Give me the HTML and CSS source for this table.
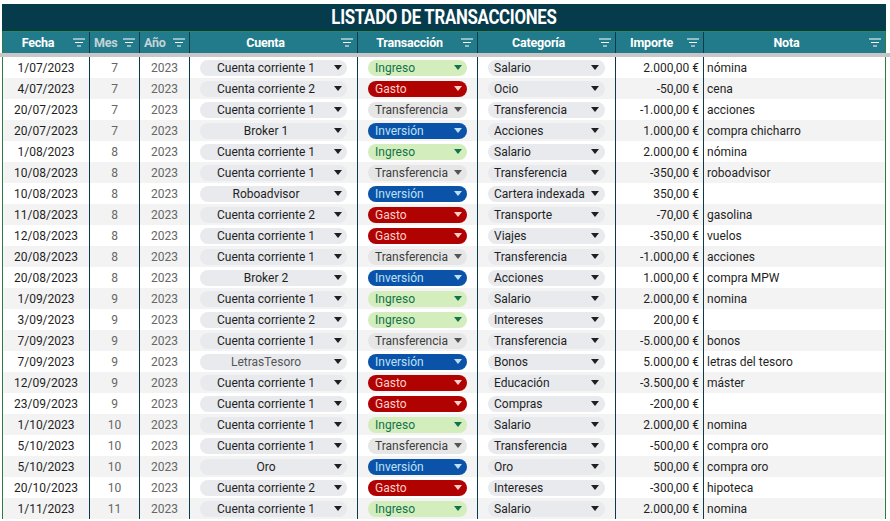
FILE: index.html
```html
<!DOCTYPE html>
<html lang="es">
<head>
<meta charset="utf-8">
<title>Listado de transacciones</title>
<link rel="stylesheet" href="styles.css">
</head>
<body>
<div class="sheet">
  <div class="title"><span class="tt">LISTADO DE TRANSACCIONES</span></div>
  <div class="head">
    <div class="hc"><span class="hl">Fecha</span><svg class="flt" viewBox="0 0 12 9"><path d="M0 1h12M2 4.5h8M4 8h4"/></svg></div>
    <div class="hc"><span class="hl dim">Mes</span><svg class="flt" viewBox="0 0 12 9"><path d="M0 1h12M2 4.5h8M4 8h4"/></svg></div>
    <div class="hc"><span class="hl dim">Año</span><svg class="flt" viewBox="0 0 12 9"><path d="M0 1h12M2 4.5h8M4 8h4"/></svg></div>
    <div class="hc"><span class="hl">Cuenta</span><svg class="flt" viewBox="0 0 12 9"><path d="M0 1h12M2 4.5h8M4 8h4"/></svg></div>
    <div class="hc"><span class="hl">Transacción</span><svg class="flt" viewBox="0 0 12 9"><path d="M0 1h12M2 4.5h8M4 8h4"/></svg></div>
    <div class="hc"><span class="hl">Categoría</span><svg class="flt" viewBox="0 0 12 9"><path d="M0 1h12M2 4.5h8M4 8h4"/></svg></div>
    <div class="hc"><span class="hl">Importe</span><svg class="flt" viewBox="0 0 12 9"><path d="M0 1h12M2 4.5h8M4 8h4"/></svg></div>
    <div class="hc"><span class="hl">Nota</span><svg class="flt" viewBox="0 0 12 9"><path d="M0 1h12M2 4.5h8M4 8h4"/></svg></div>
  </div>
  <div class="freeze"></div>
  <div class="body">
    <div class="row"><div class="c date">1/07/2023</div><div class="c num">7</div><div class="c num">2023</div><div class="c"><span class="chip acc"><span class="t">Cuenta corriente 1</span><i class="arr"></i></span></div><div class="c"><span class="chip tr ing"><span class="t">Ingreso</span><i class="arr"></i></span></div><div class="c"><span class="chip cat"><span class="t">Salario</span><i class="arr"></i></span></div><div class="c amt">2.000,00 €</div><div class="c note">nómina</div></div>
    <div class="row"><div class="c date">4/07/2023</div><div class="c num">7</div><div class="c num">2023</div><div class="c"><span class="chip acc"><span class="t">Cuenta corriente 2</span><i class="arr"></i></span></div><div class="c"><span class="chip tr gas"><span class="t">Gasto</span><i class="arr"></i></span></div><div class="c"><span class="chip cat"><span class="t">Ocio</span><i class="arr"></i></span></div><div class="c amt">-50,00 €</div><div class="c note">cena</div></div>
    <div class="row"><div class="c date">20/07/2023</div><div class="c num">7</div><div class="c num">2023</div><div class="c"><span class="chip acc"><span class="t">Cuenta corriente 1</span><i class="arr"></i></span></div><div class="c"><span class="chip tr tra"><span class="t">Transferencia</span><i class="arr"></i></span></div><div class="c"><span class="chip cat"><span class="t">Transferencia</span><i class="arr"></i></span></div><div class="c amt">-1.000,00 €</div><div class="c note">acciones</div></div>
    <div class="row"><div class="c date">20/07/2023</div><div class="c num">7</div><div class="c num">2023</div><div class="c"><span class="chip acc"><span class="t">Broker 1</span><i class="arr"></i></span></div><div class="c"><span class="chip tr inv"><span class="t">Inversión</span><i class="arr"></i></span></div><div class="c"><span class="chip cat"><span class="t">Acciones</span><i class="arr"></i></span></div><div class="c amt">1.000,00 €</div><div class="c note">compra chicharro</div></div>
    <div class="row"><div class="c date">1/08/2023</div><div class="c num">8</div><div class="c num">2023</div><div class="c"><span class="chip acc"><span class="t">Cuenta corriente 1</span><i class="arr"></i></span></div><div class="c"><span class="chip tr ing"><span class="t">Ingreso</span><i class="arr"></i></span></div><div class="c"><span class="chip cat"><span class="t">Salario</span><i class="arr"></i></span></div><div class="c amt">2.000,00 €</div><div class="c note">nómina</div></div>
    <div class="row"><div class="c date">10/08/2023</div><div class="c num">8</div><div class="c num">2023</div><div class="c"><span class="chip acc"><span class="t">Cuenta corriente 1</span><i class="arr"></i></span></div><div class="c"><span class="chip tr tra"><span class="t">Transferencia</span><i class="arr"></i></span></div><div class="c"><span class="chip cat"><span class="t">Transferencia</span><i class="arr"></i></span></div><div class="c amt">-350,00 €</div><div class="c note">roboadvisor</div></div>
    <div class="row"><div class="c date">10/08/2023</div><div class="c num">8</div><div class="c num">2023</div><div class="c"><span class="chip acc"><span class="t">Roboadvisor</span><i class="arr"></i></span></div><div class="c"><span class="chip tr inv"><span class="t">Inversión</span><i class="arr"></i></span></div><div class="c"><span class="chip cat"><span class="t">Cartera indexada</span><i class="arr"></i></span></div><div class="c amt">350,00 €</div><div class="c note"></div></div>
    <div class="row"><div class="c date">11/08/2023</div><div class="c num">8</div><div class="c num">2023</div><div class="c"><span class="chip acc"><span class="t">Cuenta corriente 2</span><i class="arr"></i></span></div><div class="c"><span class="chip tr gas"><span class="t">Gasto</span><i class="arr"></i></span></div><div class="c"><span class="chip cat"><span class="t">Transporte</span><i class="arr"></i></span></div><div class="c amt">-70,00 €</div><div class="c note">gasolina</div></div>
    <div class="row"><div class="c date">12/08/2023</div><div class="c num">8</div><div class="c num">2023</div><div class="c"><span class="chip acc"><span class="t">Cuenta corriente 1</span><i class="arr"></i></span></div><div class="c"><span class="chip tr gas"><span class="t">Gasto</span><i class="arr"></i></span></div><div class="c"><span class="chip cat"><span class="t">Viajes</span><i class="arr"></i></span></div><div class="c amt">-350,00 €</div><div class="c note">vuelos</div></div>
    <div class="row"><div class="c date">20/08/2023</div><div class="c num">8</div><div class="c num">2023</div><div class="c"><span class="chip acc"><span class="t">Cuenta corriente 1</span><i class="arr"></i></span></div><div class="c"><span class="chip tr tra"><span class="t">Transferencia</span><i class="arr"></i></span></div><div class="c"><span class="chip cat"><span class="t">Transferencia</span><i class="arr"></i></span></div><div class="c amt">-1.000,00 €</div><div class="c note">acciones</div></div>
    <div class="row"><div class="c date">20/08/2023</div><div class="c num">8</div><div class="c num">2023</div><div class="c"><span class="chip acc"><span class="t">Broker 2</span><i class="arr"></i></span></div><div class="c"><span class="chip tr inv"><span class="t">Inversión</span><i class="arr"></i></span></div><div class="c"><span class="chip cat"><span class="t">Acciones</span><i class="arr"></i></span></div><div class="c amt">1.000,00 €</div><div class="c note">compra MPW</div></div>
    <div class="row"><div class="c date">1/09/2023</div><div class="c num">9</div><div class="c num">2023</div><div class="c"><span class="chip acc"><span class="t">Cuenta corriente 1</span><i class="arr"></i></span></div><div class="c"><span class="chip tr ing"><span class="t">Ingreso</span><i class="arr"></i></span></div><div class="c"><span class="chip cat"><span class="t">Salario</span><i class="arr"></i></span></div><div class="c amt">2.000,00 €</div><div class="c note">nomina</div></div>
    <div class="row"><div class="c date">3/09/2023</div><div class="c num">9</div><div class="c num">2023</div><div class="c"><span class="chip acc"><span class="t">Cuenta corriente 2</span><i class="arr"></i></span></div><div class="c"><span class="chip tr ing"><span class="t">Ingreso</span><i class="arr"></i></span></div><div class="c"><span class="chip cat"><span class="t">Intereses</span><i class="arr"></i></span></div><div class="c amt">200,00 €</div><div class="c note"></div></div>
    <div class="row"><div class="c date">7/09/2023</div><div class="c num">9</div><div class="c num">2023</div><div class="c"><span class="chip acc"><span class="t">Cuenta corriente 1</span><i class="arr"></i></span></div><div class="c"><span class="chip tr tra"><span class="t">Transferencia</span><i class="arr"></i></span></div><div class="c"><span class="chip cat"><span class="t">Transferencia</span><i class="arr"></i></span></div><div class="c amt">-5.000,00 €</div><div class="c note">bonos</div></div>
    <div class="row"><div class="c date">7/09/2023</div><div class="c num">9</div><div class="c num">2023</div><div class="c"><span class="chip acc muted"><span class="t">LetrasTesoro</span><i class="arr"></i></span></div><div class="c"><span class="chip tr inv"><span class="t">Inversión</span><i class="arr"></i></span></div><div class="c"><span class="chip cat"><span class="t">Bonos</span><i class="arr"></i></span></div><div class="c amt">5.000,00 €</div><div class="c note">letras del tesoro</div></div>
    <div class="row"><div class="c date">12/09/2023</div><div class="c num">9</div><div class="c num">2023</div><div class="c"><span class="chip acc"><span class="t">Cuenta corriente 1</span><i class="arr"></i></span></div><div class="c"><span class="chip tr gas"><span class="t">Gasto</span><i class="arr"></i></span></div><div class="c"><span class="chip cat"><span class="t">Educación</span><i class="arr"></i></span></div><div class="c amt">-3.500,00 €</div><div class="c note">máster</div></div>
    <div class="row"><div class="c date">23/09/2023</div><div class="c num">9</div><div class="c num">2023</div><div class="c"><span class="chip acc"><span class="t">Cuenta corriente 1</span><i class="arr"></i></span></div><div class="c"><span class="chip tr gas"><span class="t">Gasto</span><i class="arr"></i></span></div><div class="c"><span class="chip cat"><span class="t">Compras</span><i class="arr"></i></span></div><div class="c amt">-200,00 €</div><div class="c note"></div></div>
    <div class="row"><div class="c date">1/10/2023</div><div class="c num">10</div><div class="c num">2023</div><div class="c"><span class="chip acc"><span class="t">Cuenta corriente 1</span><i class="arr"></i></span></div><div class="c"><span class="chip tr ing"><span class="t">Ingreso</span><i class="arr"></i></span></div><div class="c"><span class="chip cat"><span class="t">Salario</span><i class="arr"></i></span></div><div class="c amt">2.000,00 €</div><div class="c note">nomina</div></div>
    <div class="row"><div class="c date">5/10/2023</div><div class="c num">10</div><div class="c num">2023</div><div class="c"><span class="chip acc"><span class="t">Cuenta corriente 1</span><i class="arr"></i></span></div><div class="c"><span class="chip tr tra"><span class="t">Transferencia</span><i class="arr"></i></span></div><div class="c"><span class="chip cat"><span class="t">Transferencia</span><i class="arr"></i></span></div><div class="c amt">-500,00 €</div><div class="c note">compra oro</div></div>
    <div class="row"><div class="c date">5/10/2023</div><div class="c num">10</div><div class="c num">2023</div><div class="c"><span class="chip acc"><span class="t">Oro</span><i class="arr"></i></span></div><div class="c"><span class="chip tr inv"><span class="t">Inversión</span><i class="arr"></i></span></div><div class="c"><span class="chip cat"><span class="t">Oro</span><i class="arr"></i></span></div><div class="c amt">500,00 €</div><div class="c note">compra oro</div></div>
    <div class="row"><div class="c date">20/10/2023</div><div class="c num">10</div><div class="c num">2023</div><div class="c"><span class="chip acc"><span class="t">Cuenta corriente 2</span><i class="arr"></i></span></div><div class="c"><span class="chip tr gas"><span class="t">Gasto</span><i class="arr"></i></span></div><div class="c"><span class="chip cat"><span class="t">Intereses</span><i class="arr"></i></span></div><div class="c amt">-300,00 €</div><div class="c note">hipoteca</div></div>
    <div class="row"><div class="c date">1/11/2023</div><div class="c num">11</div><div class="c num">2023</div><div class="c"><span class="chip acc"><span class="t">Cuenta corriente 1</span><i class="arr"></i></span></div><div class="c"><span class="chip tr ing"><span class="t">Ingreso</span><i class="arr"></i></span></div><div class="c"><span class="chip cat"><span class="t">Salario</span><i class="arr"></i></span></div><div class="c amt">2.000,00 €</div><div class="c note">nomina</div></div>
  </div>
</div>
</body>
</html>
```
FILE: styles.css
```css
* { box-sizing: border-box; }
html, body { margin: 0; padding: 0; background: #fff; }
body {
  font-family: Roboto, "Noto Sans", sans-serif;
  font-size: 12px;
  color: #1f1f1f;
  overflow: hidden;
  width: 890px;
  height: 521px;
}
.sheet {
  padding: 4px 0 0 2px;
  width: 890px;
}
.title {
  width: 884px;
  height: 27px;
  background: #063b4c;
  color: #fff;
  font-weight: 700;
  font-size: 19.5px;
  line-height: 28px;
  text-align: center;
}
.tt {
  display: inline-block;
  transform: scaleX(0.86);
  transform-origin: center;
  letter-spacing: -0.3px;
}
.head, .row {
  display: grid;
  grid-template-columns: 87px 50px 50px 168px 120px 138px 88px 182px;
  width: 884px;
  border-left: 1px solid #2a7d3e;
}
.head {
  height: 22px;
  background: #227b8b;
  border-top: 1px solid #2b8a55;
}
.hc {
  display: flex;
  align-items: center;
  border-right: 1px solid #0b3b4a;
  padding-right: 4px;
}
.hc:last-child { border-right: 1px solid #2a7d3e; }
.hl {
  flex: 1;
  text-align: center;
  color: #fff;
  font-weight: 700;
  font-size: 12.5px;
  letter-spacing: -0.2px;
  padding-left: 4px;
}
.hl.dim { color: #c3d3d7; text-align: left; }
.flt {
  width: 12px;
  height: 9px;
  flex: none;
  margin-left: 4px;
}
.flt path { stroke: #fff; stroke-width: 1.2; fill: none; }
.freeze {
  margin-left: -2px;
  width: 890px;
  height: 4px;
  background: #c7c7c7;
}
.row { height: 21px; background: #fff; }
.row:nth-child(even) { background: #f3f3f3; }
.c {
  border-right: 1px solid #0b3b4a;
  display: flex;
  align-items: center;
  white-space: nowrap;
  overflow: hidden;
  padding: 0 10px 0 10px;
}
.c.date { justify-content: center; padding: 0; }
.c.num { justify-content: center; padding: 0; color: #666; }
.c.amt { justify-content: flex-end; padding: 0 4px 0 0; }
.c.note { padding: 0 0 0 3px; border-right: 1px solid #2a7d3e; }
.chip {
  display: flex;
  align-items: center;
  width: 100%;
  height: 16px;
  border-radius: 8px;
  background: #e8eaed;
  color: #1f1f1f;
}
.chip .t { flex: 1; }
.arr {
  width: 0;
  height: 0;
  border-left: 4.5px solid transparent;
  border-right: 4.5px solid transparent;
  border-top: 5px solid #1f1f1f;
  flex: none;
}
.acc { padding: 0 4px 0 6px; }
.acc .t { text-align: center; }
.acc .arr { margin-left: 8px; margin-right: 1px; }
.acc.muted { color: #555; }
.acc.muted .arr { border-top-color: #1f1f1f; }
.tr { padding: 0 5px 0 7px; }
.cat { padding: 0 6px 0 6px; }
.ing { background: #d4edbc; color: #11734b; }
.ing .arr { border-top-color: #11734b; }
.gas { background: #b10202; color: #ffcfc9; }
.gas .arr { border-top-color: #ffcfc9; }
.tra { background: #e6e6e6; color: #3d3d3d; }
.tra .arr { border-top-color: #555; }
.inv { background: #0a53a8; color: #bfe1f6; }
.inv .arr { border-top-color: #bfe1f6; }
```
